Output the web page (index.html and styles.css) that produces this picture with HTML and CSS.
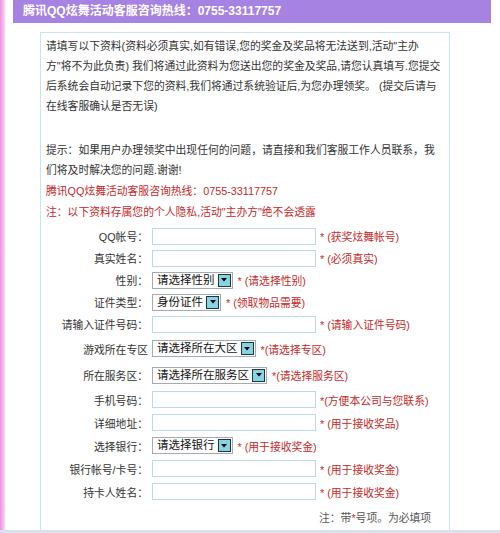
FILE: index.html
```html
<!DOCTYPE html>
<html lang="zh-CN">
<head>
<meta charset="utf-8">
<title>腾讯QQ炫舞活动</title>
<link rel="stylesheet" href="styles.css">
</head>
<body>
<div class="page">
  <div class="topbar">腾讯QQ炫舞活动客服咨询热线：0755-33117757</div>
  <div class="panel">
    <p class="intro">请填写以下资料(资料必须真实,如有错误,您的奖金及奖品将无法送到,活动"主办<br>方"将不为此负责) 我们将通过此资料为您送出您的奖金及奖品,请您认真填写.您提交<br>后系统会自动记录下您的资料,我们将通过系统验证后,为您办理领奖。 (提交后请与<br>在线客服确认是否无误)</p>
    <p class="tips">提示：如果用户办理领奖中出现任何的问题，请直接和我们客服工作人员联系，我<br>们将及时解决您的问题.谢谢!<br><span class="red">腾讯QQ炫舞活动客服咨询热线：0755-33117757</span><br><span class="red">注：以下资料存属您的个人隐私,活动"主办方"绝不会透露</span></p>
    <form class="form">
      <div class="row"><label class="lbl">QQ帐号：</label><div class="ctl"><input class="txt" type="text"><span class="hint">* (获奖炫舞帐号)</span></div></div>
      <div class="row"><label class="lbl">真实姓名：</label><div class="ctl"><input class="txt" type="text"><span class="hint">* (必须真实)</span></div></div>
      <div class="row"><label class="lbl">性别：</label><div class="ctl"><span class="sel"><span class="sel-val">请选择性别</span><span class="sel-btn"><svg width="6" height="4" viewBox="0 0 6 4"><path d="M0 0H6L3 3.5Z" fill="#000"/></svg></span></span><span class="hint hint-sel">* (请选择性别)</span></div></div>
      <div class="row"><label class="lbl">证件类型：</label><div class="ctl"><span class="sel"><span class="sel-val">身份证件</span><span class="sel-btn"><svg width="6" height="4" viewBox="0 0 6 4"><path d="M0 0H6L3 3.5Z" fill="#000"/></svg></span></span><span class="hint hint-sel">* (领取物品需要)</span></div></div>
      <div class="row"><label class="lbl">请输入证件号码：</label><div class="ctl"><input class="txt" type="text"><span class="hint">* (请输入证件号码)</span></div></div>
      <div class="row row-zone"><label class="lbl">游戏所在专区</label><div class="ctl"><span class="sel"><span class="sel-val">请选择所在大区</span><span class="sel-btn"><svg width="6" height="4" viewBox="0 0 6 4"><path d="M0 0H6L3 3.5Z" fill="#000"/></svg></span></span><span class="hint hint-sel">*(请选择专区)</span></div></div>
      <div class="row row-server"><label class="lbl">所在服务区：</label><div class="ctl"><span class="sel"><span class="sel-val">请选择所在服务区</span><span class="sel-btn"><svg width="6" height="4" viewBox="0 0 6 4"><path d="M0 0H6L3 3.5Z" fill="#000"/></svg></span></span><span class="hint hint-sel">*(请选择服务区)</span></div></div>
      <div class="row row-md"><label class="lbl">手机号码：</label><div class="ctl"><input class="txt" type="text"><span class="hint">*(方便本公司与您联系)</span></div></div>
      <div class="row row-md"><label class="lbl">详细地址：</label><div class="ctl"><input class="txt" type="text"><span class="hint">* (用于接收奖品)</span></div></div>
      <div class="row row-md"><label class="lbl">选择银行：</label><div class="ctl"><span class="sel"><span class="sel-val">请选择银行</span><span class="sel-btn"><svg width="6" height="4" viewBox="0 0 6 4"><path d="M0 0H6L3 3.5Z" fill="#000"/></svg></span></span><span class="hint hint-sel">* (用于接收奖金)</span></div></div>
      <div class="row row-md"><label class="lbl">银行帐号/卡号：</label><div class="ctl"><input class="txt" type="text"><span class="hint">* (用于接收奖金)</span></div></div>
      <div class="row row-md"><label class="lbl">持卡人姓名：</label><div class="ctl"><input class="txt" type="text"><span class="hint">* (用于接收奖金)</span></div></div>
      <div class="row row-note"><span class="lbl"></span><div class="ctl"><span class="note">注：带<span class="star">*</span>号项。为必填项</span></div></div>
    </form>
  </div>
  <div class="bottom-band"></div>
</div>
</body>
</html>
```
FILE: styles.css
```css
html, body {
  margin: 0;
  padding: 0;
}
body {
  width: 500px;
  height: 533px;
  overflow: hidden;
  background: linear-gradient(to right, #ef92e2 0, #f6c3ee 4px, #fbe6f8 5px, #ffffff 6px);
  font-family: "Liberation Sans", "Noto Sans CJK SC", sans-serif;
  font-size: 10.8px;
  color: #333;
}
.page {
  display: flex;
  flex-direction: column;
}
.topbar {
  margin-left: 13px;
  width: 478px;
  height: 23px;
  box-sizing: border-box;
  padding-left: 10px;
  background: #a682e2;
  color: #fff;
  font-weight: bold;
  font-size: 12px;
  line-height: 23px;
  white-space: nowrap;
}
.panel {
  margin-top: 9px;
  margin-left: 40px;
  width: 410px;
  box-sizing: border-box;
  border: 1px solid #c9e4ec;
  border-bottom: none;
  padding: 3px 4px 0 5px;
  background: #fff;
}
.intro {
  margin: 0;
  line-height: 20px;
  white-space: nowrap;
}
.tips {
  margin: 23.6px 0 0;
  line-height: 20.7px;
  white-space: nowrap;
}
.red {
  color: #c42a2a;
}
.form {
  margin: 2.6px 0 0;
  display: flex;
  flex-direction: column;
}
.row {
  display: flex;
  align-items: center;
  height: 22px;
}
.row-zone { height: 27px; }
.row-server { height: 26px; }
.row-md { height: 23px; }
.row-note { height: 27px; }
.lbl {
  width: 102px;
  flex: none;
  text-align: right;
  white-space: nowrap;
}
.ctl {
  margin-left: 4px;
  display: flex;
  align-items: center;
  white-space: nowrap;
}
.txt {
  width: 164px;
  height: 17px;
  box-sizing: border-box;
  margin: 0;
  padding: 0 2px;
  border: 1px solid #bcdae4;
  background: #fff;
  outline: none;
}
.hint {
  margin-left: 4px;
  color: #c42a2a;
}
.hint-sel {
  margin-left: 5px;
}
.sel {
  display: inline-flex;
  align-items: center;
  height: 17px;
  box-sizing: border-box;
  border: 1px solid #a3abb3;
  background: #fff;
  padding: 0 1px 0 4px;
}
.sel-val {
  font-size: 11.5px;
  color: #111;
  line-height: 15px;
}
.sel-btn {
  margin-left: 3px;
  width: 13px;
  height: 13px;
  box-sizing: border-box;
  border: 1px solid #24343c;
  background: #86d3e4;
  display: flex;
  align-items: center;
  justify-content: center;
}
.note {
  margin-left: 167px;
  color: #555;
}
.star {
  color: #c42a2a;
}
.bottom-band {
  height: 3px;
  background: #d8e2ef;
}
```
